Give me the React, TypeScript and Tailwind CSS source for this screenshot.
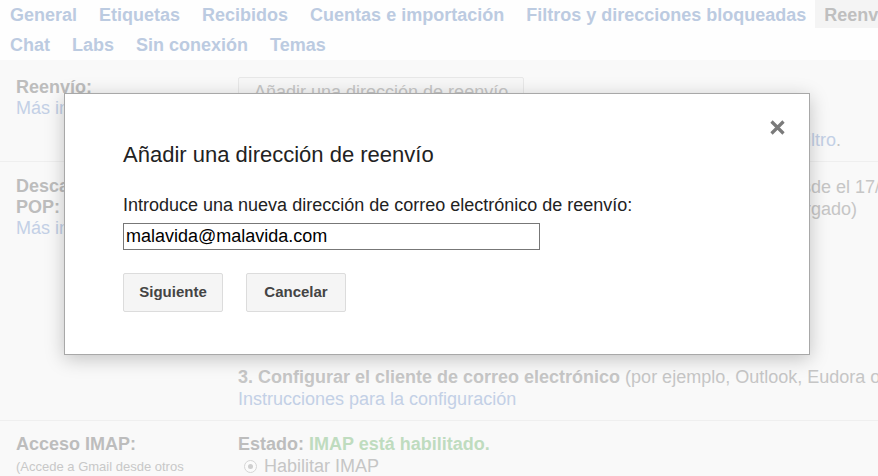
import React from "react";

const tabsRow1 = [
  "General",
  "Etiquetas",
  "Recibidos",
  "Cuentas e importación",
  "Filtros y direcciones bloqueadas",
];
const tabsRow2 = ["Chat", "Labs", "Sin conexión", "Temas"];

const Radio: React.FC<{ checked?: boolean }> = ({ checked }) => (
  <span className="inline-flex shrink-0 w-[13px] h-[13px] rounded-full border border-[#d6d6d6] bg-[#fbfbfb] items-center justify-center mr-[7px]">
    {checked && <span className="w-[5px] h-[5px] rounded-full bg-[#cfcfcf]" />}
  </span>
);

// línea cuyo comienzo queda tapado por el diálogo; solo se ve el final
const CutLine: React.FC<{ hidden: React.ReactNode; shown: React.ReactNode }> = ({
  hidden,
  shown,
}) => (
  <div className="flex">
    <div className="w-[573px] shrink-0 flex justify-end overflow-hidden">
      <span className="shrink-0">{hidden}</span>
    </div>
    <span className="shrink-0">{shown}</span>
  </div>
);

const ForwardingDialog: React.FC = () => (
  <div className="absolute left-[64px] top-[93px] w-[746px] h-[262px] bg-white border border-[#a8a8a8] shadow-[0_4px_18px_rgba(0,0,0,0.22)] pl-[58px] pt-[48px]">
    <button className="absolute right-[22px] top-[23px] w-[20px] h-[20px] flex items-center justify-center">
      <svg width="17" height="17" viewBox="0 0 17 17">
        <path d="M2.5 2.5 L14.5 14.5 M14.5 2.5 L2.5 14.5" stroke="#7a7a7a" strokeWidth="3.2" />
      </svg>
    </button>
    <h2 className="text-[22px] leading-[26px] text-[#222]">
      Añadir una dirección de reenvío
    </h2>
    <p className="mt-[26px] text-[18px] leading-[22px] text-[#222]">
      Introduce una nueva dirección de correo electrónico de reenvío:
    </p>
    <input
      type="text"
      defaultValue="malavida@malavida.com"
      className="mt-[7px] block w-[417px] h-[27px] border border-[#777] px-[2px] text-[18px] text-black outline-none"
    />
    <div className="mt-[23px] flex gap-[23px]">
      <button className="w-[100px] h-[39px] rounded-[2px] border border-[#dcdcdc] bg-[#f5f5f5] text-[15px] font-bold text-[#444]">
        Siguiente
      </button>
      <button className="w-[100px] h-[39px] rounded-[2px] border border-[#dcdcdc] bg-[#f5f5f5] text-[15px] font-bold text-[#444]">
        Cancelar
      </button>
    </div>
  </div>
);

export default function App() {
  return (
    <div className="relative w-[878px] h-[476px] overflow-hidden bg-[#f9f9f9] font-['Liberation_Sans',Arial,sans-serif] whitespace-nowrap">
      {/* Pestañas */}
      <div className="h-[60px] bg-[#fefefe] text-[18px] font-bold leading-[30px] overflow-hidden">
        <div className="flex gap-[22px] pl-[10px]">
          {tabsRow1.map((t) => (
            <span key={t} className="shrink-0 text-[#bccbe1]">
              {t}
            </span>
          ))}
          <span className="shrink-0 -ml-[13px] pl-[9px] pr-[20px] h-[28px] leading-[30px] bg-[#f4f4f4] text-[#bfbfbf]">
            Reenvío y correo POP/IMAP
          </span>
        </div>
        <div className="flex gap-[22px] pl-[10px]">
          {tabsRow2.map((t) => (
            <span key={t} className="text-[#bccbe1]">
              {t}
            </span>
          ))}
        </div>
      </div>

      {/* Reenvío */}
      <div className="flex border-b border-[#efefef] pt-[17px] pb-[10px] text-[18px] leading-[21px]">
        <div className="w-[238px] shrink-0 pl-[16px]">
          <div className="font-bold text-[#bdbdbd]">Reenvío:</div>
          <div className="text-[#c3d0e6]">Más información</div>
        </div>
        <div className="min-w-0">
          <button className="h-[30px] px-[15px] border border-[#e8e8e8] bg-[#f7f7f7] text-[18px] text-[#c6c6c6] rounded-[2px]">
            Añadir una dirección de reenvío
          </button>
          <div className="mt-[23px] text-[#c3d0e6]">
            <CutLine
              hidden={
                <>
                  <span className="text-[#c6c6c6]">
                    Consejo: también puedes reenviar solo algunos de tus mensajes creando un{" "}
                  </span>
                  fi
                </>
              }
              shown={
                <>
                  ltro<span className="text-[#c6c6c6]">.</span>
                </>
              }
            />
          </div>
        </div>
      </div>

      {/* Descarga POP */}
      <div className="flex border-b border-[#efefef] pt-[14px] pb-[10px] text-[18px] leading-[22px]">
        <div className="w-[238px] shrink-0 pl-[16px] leading-[21px]">
          <div className="font-bold text-[#bdbdbd]">Descarga</div>
          <div className="font-bold text-[#bdbdbd]">POP:</div>
          <div className="text-[#c3d0e6]">Más información</div>
        </div>
        <div className="min-w-0 text-[#c6c6c6]">
          <CutLine
            hidden={
              <>
                <b>1. Estado: </b>POP está habilitado para todos los mensajes que han llegado des
              </>
            }
            shown="de el 17/11/14"
          />
          <CutLine hidden="(incluso los que ya se han descar" shown="gado)" />
          <div className="h-[146px] pt-[4px]">
            <div className="flex items-center pl-[6px]">
              <Radio checked />
              Habilitar POP para todos los mensajes
            </div>
            <div className="flex items-center pl-[6px]">
              <Radio />
              Habilitar POP para los mensajes que se reciban a partir de ahora
            </div>
            <div className="flex items-center pl-[6px]">
              <Radio />
              Inhabilitar POP
            </div>
            <div className="mt-[14px]">
              <b>2. Cuando se accede a los mensajes a través de POP</b>
            </div>
          </div>
          <div>
            <b>3. Configurar el cliente de correo electrónico</b> (por ejemplo, Outlook, Eudora o Netscape Mail)
          </div>
          <div className="text-[#c3d0e6]">Instrucciones para la configuración</div>
        </div>
      </div>

      {/* Acceso IMAP */}
      <div className="flex pt-[12px] text-[18px] leading-[22px]">
        <div className="w-[238px] shrink-0 pl-[16px]">
          <div className="font-bold text-[#bdbdbd]">Acceso IMAP:</div>
          <div className="text-[13px] leading-[24px] text-[#c8c8c8]">
            (Accede a Gmail desde otros
          </div>
        </div>
        <div className="min-w-0">
          <div className="font-bold">
            <span className="text-[#bdbdbd]">Estado: </span>
            <span className="text-[#bfdcbf]">IMAP está habilitado.</span>
          </div>
          <div className="flex items-center pl-[6px] text-[#c6c6c6]">
            <Radio checked />
            Habilitar IMAP
          </div>
        </div>
      </div>

      <ForwardingDialog />
    </div>
  );
}
